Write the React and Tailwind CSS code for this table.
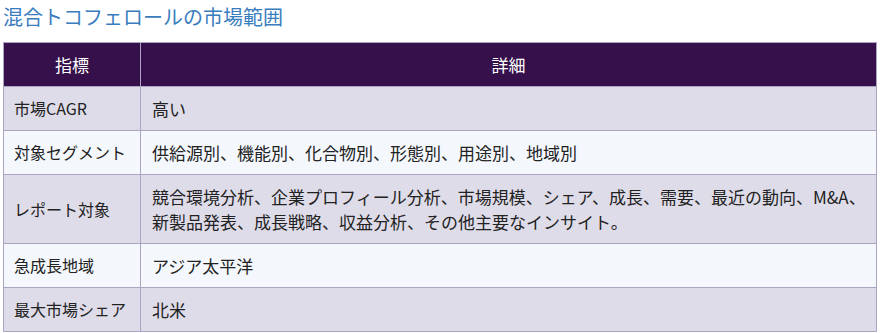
export default function App() {
  const rows = [
    ["市場CAGR", "高い"],
    ["対象セグメント", "供給源別、機能別、化合物別、形態別、用途別、地域別"],
    ["レポート対象", "競合環境分析、企業プロフィール分析、市場規模、シェア、成長、需要、最近の動向、M&A、新製品発表、成長戦略、収益分析、その他主要なインサイト。"],
    ["急成長地域", "アジア太平洋"],
    ["最大市場シェア", "北米"],
  ];
  return (
    <div className="w-[880px] h-[333px] bg-white pl-[3px] pr-[3px] overflow-hidden" style={{ fontFamily: '"Noto Sans CJK JP", "Noto Sans", sans-serif' }}>
      <h2 className="text-[20px] leading-[34px] text-[#3a7dbf] m-0 h-[42px] pt-0">混合トコフェロールの市場範囲</h2>
      <table className="w-[874px] border-collapse table-fixed text-[#222]">
        <colgroup>
          <col className="w-[137px]" />
          <col />
        </colgroup>
        <thead>
          <tr className="bg-[#36104a] text-white h-[44px]">
            <th className="border border-[#aba4c2] font-normal text-[17px] text-center px-[10px] py-[9px] leading-[25px]">指標</th>
            <th className="border border-[#aba4c2] font-normal text-[17px] text-center px-[10px] py-[9px] leading-[25px]">詳細</th>
          </tr>
        </thead>
        <tbody>
          {rows.map((r, i) => (
            <tr key={i} className={i % 2 === 0 ? "bg-[#dfdce9]" : "bg-[#f4f8fd]"}>
              <td className="border border-[#aba4c2] text-[16px] px-[10px] py-[9px] leading-[25px] align-middle whitespace-nowrap">{r[0]}</td>
              <td className="border border-[#aba4c2] text-[17px] pl-[11px] pr-[8px] py-[9px] leading-[25px] align-middle">{r[1]}</td>
            </tr>
          ))}
        </tbody>
      </table>
    </div>
  );
}
